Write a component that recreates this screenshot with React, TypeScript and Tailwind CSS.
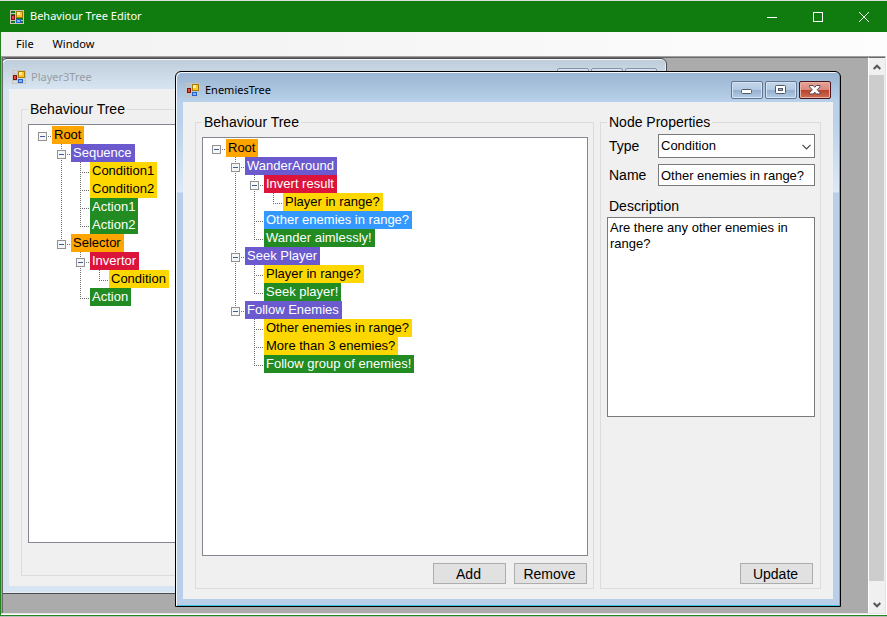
import type { ReactNode } from "react";

type Kind = "root" | "sequence" | "condition" | "action" | "invert" | "selected";

interface TreeNode {
  label: string;
  kind: Kind;
  children?: TreeNode[];
}

const kindStyles: Record<Kind, string> = {
  root: "bg-[#ffa500] text-black",
  sequence: "bg-[#6a5acd] text-white",
  condition: "bg-[#ffd700] text-black",
  action: "bg-[#228b22] text-white",
  invert: "bg-[#dc143c] text-white",
  selected: "bg-[#3399ff] text-white",
};

const playerTree: TreeNode = {
  label: "Root",
  kind: "root",
  children: [
    {
      label: "Sequence",
      kind: "sequence",
      children: [
        { label: "Condition1", kind: "condition" },
        { label: "Condition2", kind: "condition" },
        { label: "Action1", kind: "action" },
        { label: "Action2", kind: "action" },
      ],
    },
    {
      label: "Selector",
      kind: "root",
      children: [
        { label: "Invertor", kind: "invert", children: [{ label: "Condition", kind: "condition" }] },
        { label: "Action", kind: "action" },
      ],
    },
  ],
};

const enemiesTree: TreeNode = {
  label: "Root",
  kind: "root",
  children: [
    {
      label: "WanderAround",
      kind: "sequence",
      children: [
        { label: "Invert result", kind: "invert", children: [{ label: "Player in range?", kind: "condition" }] },
        { label: "Other enemies in range?", kind: "selected" },
        { label: "Wander aimlessly!", kind: "action" },
      ],
    },
    {
      label: "Seek Player",
      kind: "sequence",
      children: [
        { label: "Player in range?", kind: "condition" },
        { label: "Seek player!", kind: "action" },
      ],
    },
    {
      label: "Follow Enemies",
      kind: "sequence",
      children: [
        { label: "Other enemies in range?", kind: "condition" },
        { label: "More than 3 enemies?", kind: "condition" },
        { label: "Follow group of enemies!", kind: "action" },
      ],
    },
  ],
};

function FormIcon() {
  return (
    <svg width="14" height="14" viewBox="0 0 14 14" className="shrink-0" shapeRendering="crispEdges" aria-hidden="true">
      <path d="M0.5 0.5h13v13h-13zM5.5 0v14M0 3.5h6M0 10.5h14" fill="none" stroke="#c9c5bd" />
      <rect x="1" y="5" width="4" height="5" fill="#7c1212" />
      <rect x="2" y="6" width="2" height="3" fill="#e8483a" />
      <rect x="6" y="1" width="7" height="7" fill="#a87a08" />
      <rect x="7" y="2" width="5" height="5" fill="#fbc52c" />
      <rect x="7" y="2" width="3" height="3" fill="#fff0a8" />
      <rect x="6" y="9" width="5" height="4" fill="#2a62c4" />
      <rect x="7" y="10" width="3" height="2" fill="#7fb2f7" />
    </svg>
  );
}

interface GuideProps {
  up?: boolean;
  down?: boolean;
  branch?: boolean;
  expander?: boolean;
}

function Guide({ up, down, branch, expander }: GuideProps) {
  return (
    <svg width="19" height="18" viewBox="0 0 19 18" className="shrink-0" shapeRendering="crispEdges" aria-hidden="true">
      <g stroke="#6e6e6e" strokeDasharray="1 1">
        {up && <path d="M9.5 0V10" />}
        {down && <path d="M9.5 10V18" />}
        {branch && <path d="M9 10.5H18" />}
      </g>
      {expander && (
        <>
          <rect x="5.5" y="6.5" width="8" height="8" fill="#f6f6f6" stroke="#919191" />
          <path d="M7 10.5H12" stroke="#3c5aa0" />
        </>
      )}
    </svg>
  );
}

function Branch({ node, trail, isRoot, isLast }: { node: TreeNode; trail: boolean[]; isRoot?: boolean; isLast: boolean }) {
  const nextTrail = isRoot ? trail : [...trail, !isLast];
  return (
    <li>
      <div className="flex h-[18px]">
        {!isRoot && <Guide />}
        {trail.map((open, i) => (
          <Guide key={i} up={open} down={open} />
        ))}
        <Guide up={!isRoot} down={!isLast} branch expander={!!node.children} />
        <span className={`pr-[3px] pl-[2px] text-[13px] leading-[18px] whitespace-nowrap ${kindStyles[node.kind]}`}>
          {node.label}
        </span>
      </div>
      {node.children && (
        <ul>
          {node.children.map((child, i) => (
            <Branch key={i} node={child} trail={nextTrail} isLast={i === node.children!.length - 1} />
          ))}
        </ul>
      )}
    </li>
  );
}

function TreeView({ root }: { root: TreeNode }) {
  return (
    <div className="min-h-0 flex-1 overflow-hidden border border-[#828790] bg-white pt-px pl-1">
      <ul>
        <Branch node={root} trail={[]} isRoot isLast />
      </ul>
    </div>
  );
}

function GroupBox({ title, className, children }: { title: string; className: string; children: ReactNode }) {
  return (
    <fieldset className={`flex min-w-0 flex-col border border-[#dcdcdc] pr-[5px] pb-1 pl-[6px] ${className}`}>
      <legend className="px-[2px] text-sm leading-4">{title}</legend>
      {children}
    </fieldset>
  );
}

function PushButton({ children }: { children: string }) {
  return (
    <button type="button" className="h-[21px] w-[73px] border border-[#adadad] bg-[#e1e1e1] pr-[2px] text-sm leading-4">
      {children}
    </button>
  );
}

const captionButton = "flex h-[18px] w-8 items-center justify-center rounded-[2px] border";
const blueCaption =
  "border-[#66758f] bg-[linear-gradient(#c3d6ea_0%,#b4cae2_48%,#94aecb_50%,#b4cee9_100%)] shadow-[inset_0_0_0_1px_#d3e3f4]";
const redCaption =
  "border-[#47141c] bg-[linear-gradient(#e6a397_0%,#d98a7c_48%,#b8412a_50%,#cf6e56_100%)] shadow-[inset_0_0_0_1px_#e9b0a4]";
const fadedCaption = "border-[#8793a8] bg-[#c5d3e2] shadow-[inset_0_0_0_1px_#d9e4f0]";

function ChildWindow({ title, active, place, children }: { title: string; active: boolean; place: string; children: ReactNode }) {
  const frame = active
    ? "border-black bg-[linear-gradient(#99b4d1_0px,#b9d1ea_30px,#b9d1ea_50px,#dde9f6_120px,#b9cfe9_121px)] shadow-[inset_1px_1px_0_#f4f8fc,inset_-1px_-1px_0_#3cc4dc]"
    : "border-[#4c4c4c] bg-[linear-gradient(#bfcddb_0px,#d7e4f2_30px)] shadow-[inset_1px_1px_0_#f4f8fc,inset_-1px_-1px_0_#e4ecf5]";
  return (
    <section className={`absolute flex h-[536px] w-[666px] flex-col rounded-t-[6px] border p-[7px] pt-px ${frame} ${place}`}>
      <header className="flex h-[29px] shrink-0 items-end justify-between pb-[3px]">
        <h2 className="flex h-[18px] items-center gap-[5px] pl-[3px] font-['Noto_Sans','Open_Sans',sans-serif] text-[11px]">
          <FormIcon />
          <span className={active ? "text-black" : "text-[#999da3]"}>{title}</span>
        </h2>
        <div className="flex gap-[2px] pr-[2px]">
          <button type="button" aria-label="Minimize" className={`${captionButton} ${active ? blueCaption : fadedCaption}`}>
            {active && (
              <svg width="12" height="12" viewBox="0 0 12 12">
                <rect x="0.5" y="5.5" width="10" height="4" rx="1" fill="#fff" stroke="#515866" />
              </svg>
            )}
          </button>
          <button type="button" aria-label="Maximize" className={`${captionButton} ${active ? blueCaption : fadedCaption}`}>
            {active && (
              <svg width="12" height="10" viewBox="0 0 12 10">
                <rect x="0.5" y="0.5" width="10" height="8" rx="1" fill="#fff" stroke="#515866" />
                <rect x="3.5" y="3.5" width="4" height="2" fill="#9db6d2" stroke="#515866" />
              </svg>
            )}
          </button>
          <button type="button" aria-label="Close" className={`${captionButton} ${active ? redCaption : fadedCaption}`}>
            {active && (
              <svg width="12" height="10" viewBox="0 0 12 10">
                <path
                  d="M0.5 0.5H4.2L5.8 2.3L7.4 0.5H11V1.8L8.2 4.7L11 7.7V9H7.4L5.8 7.2L4.2 9H0.5V7.7L3.3 4.7L0.5 1.8Z"
                  fill="#fff"
                  stroke="#4f4b55"
                />
              </svg>
            )}
          </button>
        </div>
      </header>
      <div className="flex min-h-0 flex-1 gap-[6px] bg-[#f0f0f0] px-3 pt-3 pb-[10px]">{children}</div>
    </section>
  );
}

export default function App() {
  return (
    <div className="flex h-screen w-full flex-col overflow-hidden border-t border-b border-t-[#dcdcdc] border-b-[#bcbcbc] bg-white font-['Liberation_Sans',Arial,sans-serif] text-black">
      <header className="flex h-[31px] shrink-0 items-center justify-between bg-[#107c10] pl-[10px] text-white">
        <h1 className="flex items-center gap-[6px] font-['Noto_Sans','Open_Sans',sans-serif] text-[11px]">
          <FormIcon />
          Behaviour Tree Editor
        </h1>
        <div className="flex">
          <button type="button" aria-label="Minimize" className="flex h-[31px] w-[46px] items-center justify-center">
            <svg width="10" height="10" viewBox="0 0 10 10" stroke="#fff">
              <path d="M0 5.5H10" />
            </svg>
          </button>
          <button type="button" aria-label="Maximize" className="flex h-[31px] w-[46px] items-center justify-center">
            <svg width="10" height="10" viewBox="0 0 10 10" stroke="#fff" fill="none">
              <rect x="0.5" y="0.5" width="9" height="9" />
            </svg>
          </button>
          <button type="button" aria-label="Close" className="flex h-[31px] w-[46px] items-center justify-center">
            <svg width="10" height="10" viewBox="0 0 10 10" stroke="#fff">
              <path d="M0 0L10 10M10 0L0 10" />
            </svg>
          </button>
        </div>
      </header>

      <div className="flex min-h-0 flex-1 flex-col border-b border-l border-[#228422]">
        <nav className="flex h-6 shrink-0 items-center gap-[3px] bg-[linear-gradient(90deg,#f1f1f1,#fdfdfd)] pl-[7px] font-['Noto_Sans','Open_Sans',sans-serif] text-[11px]">
          <button type="button" className="px-2">File</button>
          <button type="button" className="px-2">Window</button>
        </nav>

        <div className="mr-px mb-px flex min-h-0 flex-1 border border-t-[#a0a0a0] border-r-[#e3e3e3] border-b-[#e3e3e3] border-l-[#a0a0a0]">
          <main className="relative min-w-0 flex-1 overflow-hidden border-t border-l border-[#696969] bg-[#ababab]">
            <ChildWindow title="Player3Tree" active={false} place="top-0 -left-[2px]">
              <GroupBox title="Behaviour Tree" className="flex-1 pt-[7px]">
                <TreeView root={playerTree} />
                <div className="h-7 shrink-0" />
              </GroupBox>
            </ChildWindow>

            <ChildWindow title="EnemiesTree" active place="top-[13px] left-[172px]">
              <GroupBox title="Behaviour Tree" className="flex-1 pt-[7px]">
                <TreeView root={enemiesTree} />
                <div className="mt-[7px] flex justify-end gap-2 pr-px">
                  <PushButton>Add</PushButton>
                  <PushButton>Remove</PushButton>
                </div>
              </GroupBox>

              <GroupBox title="Node Properties" className="w-[221px] shrink-0 pt-1">
                <div className="flex items-center">
                  <label htmlFor="node-type" className="w-[51px] pl-[2px] text-sm leading-4">Type</label>
                  <div className="relative flex-1">
                    <select
                      id="node-type"
                      defaultValue="Condition"
                      className="block h-6 w-full appearance-none rounded-none border border-[#7a7a7a] bg-white pl-[2px] text-[13px] leading-4"
                    >
                      <option>Condition</option>
                    </select>
                    <svg
                      width="9"
                      height="6"
                      viewBox="0 0 9 6"
                      className="pointer-events-none absolute top-[10px] right-1"
                      fill="none"
                      stroke="#444"
                      strokeWidth="1.2"
                      aria-hidden="true"
                    >
                      <path d="M0.5 0.8L4.5 4.8L8.5 0.8" />
                    </svg>
                  </div>
                </div>
                <div className="mt-[6px] flex items-center">
                  <label htmlFor="node-name" className="w-[51px] pl-[2px] text-sm leading-4">Name</label>
                  <input
                    id="node-name"
                    type="text"
                    defaultValue="Other enemies in range?"
                    className="h-[22px] min-w-0 flex-1 border border-[#7a7a7a] bg-white pl-[2px] text-[13px] leading-4"
                  />
                </div>
                <label htmlFor="node-description" className="mt-3 mb-[3px] pl-[2px] text-sm leading-4">Description</label>
                <textarea
                  id="node-description"
                  defaultValue="Are there any other enemies in range?"
                  className="h-[200px] resize-none border border-[#7a7a7a] bg-white px-[2px] pt-[2px] text-[13px] leading-4"
                />
                <div className="mt-auto flex justify-end pr-[2px]">
                  <PushButton>Update</PushButton>
                </div>
              </GroupBox>
            </ChildWindow>
          </main>

          <div className="flex w-[17px] shrink-0 flex-col border-t border-l border-t-[#696969] border-l-white bg-[#f0f0f0]">
            <button type="button" aria-label="Scroll up" className="flex h-[17px] shrink-0 items-center justify-center">
              <svg width="8" height="6" viewBox="0 0 8 6" fill="none" stroke="#555" strokeWidth="2">
                <path d="M0.7 5L4 1.7L7.3 5" />
              </svg>
            </button>
            <div className="mr-px min-h-0 flex-1 bg-[#cdcdcd]" />
            <div className="h-[15px] shrink-0" />
            <button type="button" aria-label="Scroll down" className="flex h-[17px] shrink-0 items-center justify-center">
              <svg width="8" height="6" viewBox="0 0 8 6" fill="none" stroke="#555" strokeWidth="2">
                <path d="M0.7 1L4 4.3L7.3 1" />
              </svg>
            </button>
          </div>
        </div>
      </div>
    </div>
  );
}
